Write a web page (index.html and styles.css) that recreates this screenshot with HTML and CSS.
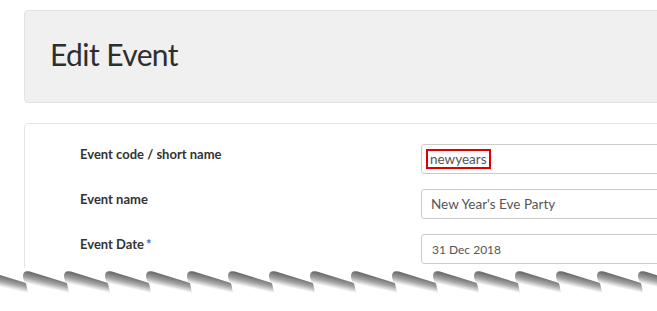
FILE: index.html
```html
<!DOCTYPE html>
<html>
<head>
<meta charset="utf-8">
<link rel="stylesheet" href="styles.css">
</head>
<body>
<div class="page">
  <div class="clip">
    <div class="panel header"><h1 class="title">Edit Event</h1></div>
    <div class="panel form">
      <div class="row">
        <div class="label">Event code / short name</div>
        <div class="field"><span class="mark">newyears</span></div>
      </div>
      <div class="row">
        <div class="label">Event name</div>
        <div class="field">New Year's Eve Party</div>
      </div>
      <div class="row">
        <div class="label">Event Date<span class="req">*</span></div>
        <div class="field small">31 Dec 2018</div>
      </div>
    </div>
  </div>
  <svg class="tear" width="657" height="30" viewBox="0 0 657 30">
    <defs>
      <linearGradient id="g" gradientUnits="userSpaceOnUse" x1="21" y1="6" x2="18.5" y2="17">
        <stop offset="0" stop-color="#6e6e6e"/>
        <stop offset="0.5" stop-color="#a5a5a5"/>
        <stop offset="1" stop-color="#ffffff"/>
      </linearGradient>
      <path id="t" d="M0,6 C0,1.5 3,0.5 7,1.5 L44,13 L46,23 L6,15 C2,14 0,10 0,6 Z" fill="url(#g)"/>
    </defs>
    <use href="#t" x="-18" y="2"/>
    <use href="#t" x="23" y="2"/>
    <use href="#t" x="64" y="2"/>
    <use href="#t" x="105" y="2"/>
    <use href="#t" x="146" y="2"/>
    <use href="#t" x="187" y="2"/>
    <use href="#t" x="228" y="2"/>
    <use href="#t" x="269" y="2"/>
    <use href="#t" x="310" y="2"/>
    <use href="#t" x="351" y="2"/>
    <use href="#t" x="392" y="2"/>
    <use href="#t" x="433" y="2"/>
    <use href="#t" x="474" y="2"/>
    <use href="#t" x="515" y="2"/>
    <use href="#t" x="556" y="2"/>
    <use href="#t" x="597" y="2"/>
    <use href="#t" x="638" y="2"/>
  </svg>
</div>
</body>
</html>
```
FILE: styles.css
```css
html, body {
  margin: 0;
  padding: 0;
  background: #fff;
  overflow: hidden;
}
.page {
  width: 657px;
  height: 311px;
  overflow: hidden;
  font-family: Lato, "Open Sans", sans-serif;
}
.clip {
  height: 268px;
  overflow: hidden;
  padding: 10px 0 0 24px;
  box-sizing: border-box;
}
.panel {
  width: 680px;
  box-sizing: border-box;
  border-radius: 4px;
}
.header {
  height: 93px;
  background: #f0f0f0;
  border: 1px solid #e2e2e2;
  display: flex;
  align-items: center;
}
.title {
  margin: 0 0 6px;
  padding-left: 25px;
  font-size: 30px;
  font-weight: 400;
  color: #2e2e2e;
  letter-spacing: -0.6px;
}
.form {
  margin-top: 20px;
  border: 1px solid #e6e6e6;
  padding: 20px 0 40px 55px;
  display: flex;
  flex-direction: column;
  gap: 15px;
}
.row {
  display: grid;
  grid-template-columns: 341px 1fr;
}
.label {
  padding-top: 2px;
  font-size: 13px;
  font-weight: 700;
  color: #333;
}
.req {
  color: #2f6fb0;
  margin-left: 2px;
}
.field {
  height: 30px;
  box-sizing: border-box;
  border: 1px solid #ccc;
  border-radius: 3px;
  padding: 0 9px;
  display: flex;
  align-items: center;
  font-size: 13.5px;
  color: #555;
}
.field.small {
  font-size: 12px;
  padding-left: 10px;
}
.mark {
  margin-left: -5px;
  border: 2px solid #e00000;
  padding: 0 2px;
  line-height: 16px;
}
.tear {
  display: block;
}
```
